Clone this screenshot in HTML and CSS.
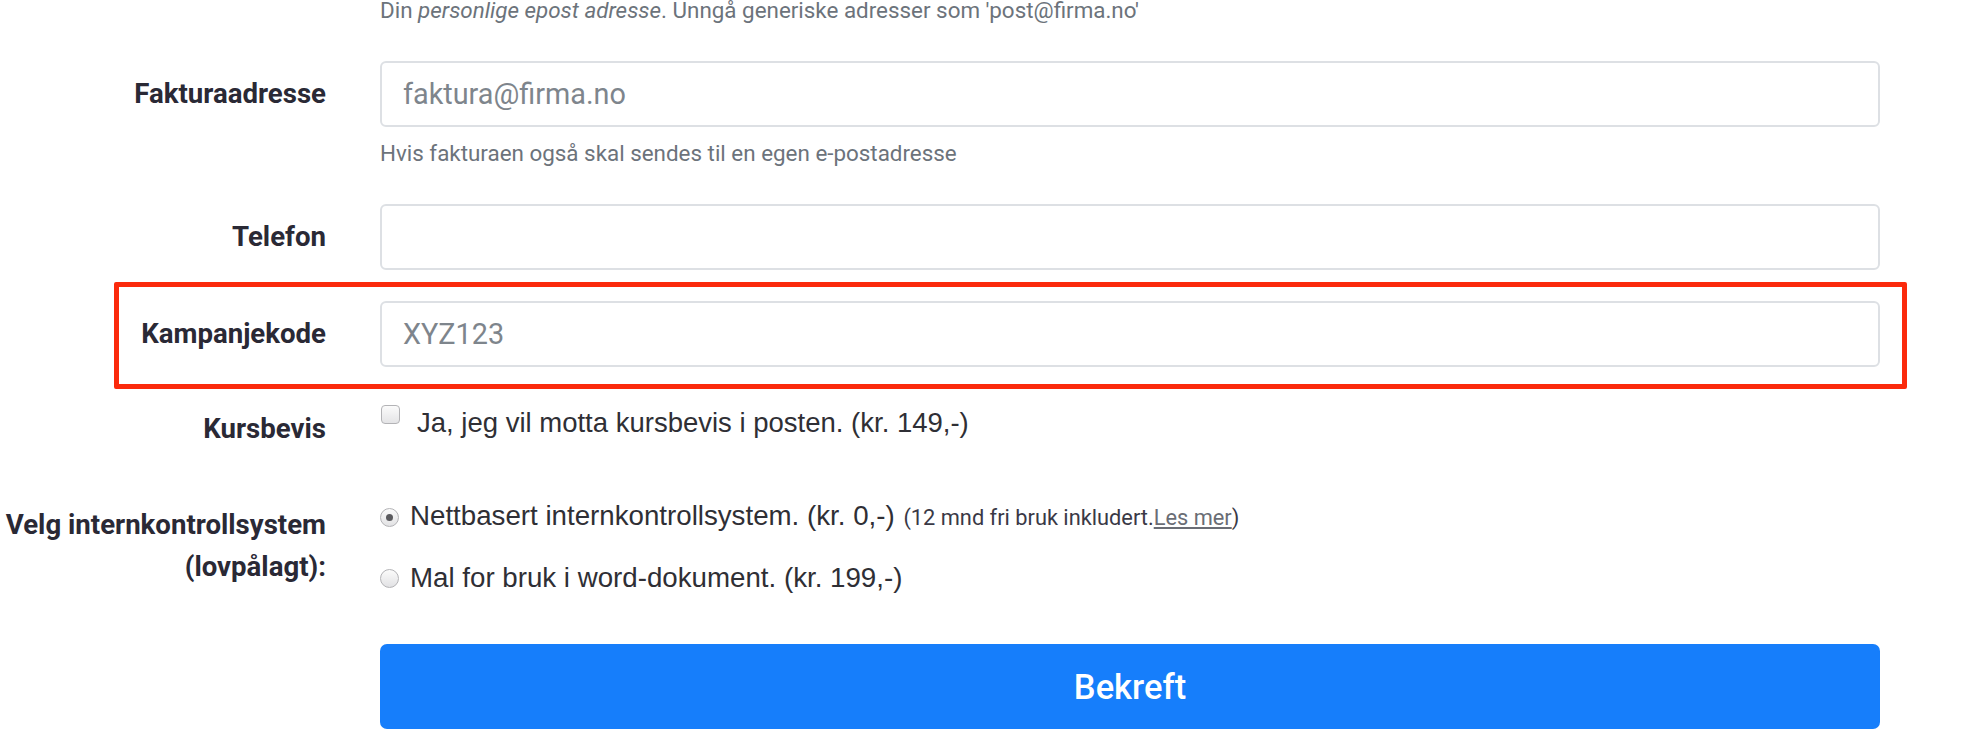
FILE: index.html
```html
<!DOCTYPE html>
<html lang="no">
<head>
<meta charset="utf-8">
<title>Bestilling</title>
<link rel="stylesheet" href="styles.css">
</head>
<body>
<form class="form">
  <div class="row row-top">
    <div></div>
    <div class="field">
      <small class="help">Din <em>personlige epost adresse</em>. Unngå generiske adresser som 'post@firma.no'</small>
    </div>
  </div>

  <div class="row row-faktura">
    <label class="label label-mid" for="faktura">Fakturaadresse</label>
    <div class="field">
      <input class="input" id="faktura" type="email" placeholder="faktura@firma.no">
      <small class="help help-below">Hvis fakturaen også skal sendes til en egen e-postadresse</small>
    </div>
  </div>

  <div class="row row-telefon">
    <label class="label label-mid" for="telefon">Telefon</label>
    <div class="field">
      <input class="input" id="telefon" type="tel">
    </div>
  </div>

  <div class="row row-kampanje highlight">
    <label class="label label-mid" for="kampanje">Kampanjekode</label>
    <div class="field">
      <input class="input" id="kampanje" type="text" placeholder="XYZ123">
    </div>
  </div>

  <div class="row row-kurs">
    <div class="label label-kurs">Kursbevis</div>
    <div class="field">
      <div class="check">
        <span class="box"></span>
        <span class="opt-text">Ja, jeg vil motta kursbevis i posten. (kr. 149,-)</span>
      </div>
    </div>
  </div>

  <div class="row row-ik">
    <div class="label label-ik">Velg internkontrollsystem<br>(lovpålagt):</div>
    <div class="field">
      <div class="radio">
        <span class="dot checked"></span>
        <span class="opt-text">Nettbasert internkontrollsystem. (kr. 0,-) <span class="note">(12 mnd fri bruk inkludert.<a href="#" class="more">Les mer</a>)</span></span>
      </div>
      <div class="radio radio-2">
        <span class="dot"></span>
        <span class="opt-text">Mal for bruk i word-dokument. (kr. 199,-)</span>
      </div>
    </div>
  </div>

  <div class="row row-btn">
    <div></div>
    <div class="field">
      <button type="button" class="btn">Bekreft</button>
    </div>
  </div>
</form>
</body>
</html>
```

FILE: styles.css
```css
html, body {
  margin: 0;
  padding: 0;
  background: #ffffff;
  overflow: hidden;
}

body {
  font-family: Roboto, "Liberation Sans", Arial, sans-serif;
  color: #2a2935;
}

.form {
  width: 1880px;
}

.row {
  display: grid;
  grid-template-columns: 326px 1500px;
  column-gap: 54px;
}

.field {
  display: flex;
  flex-direction: column;
}

.help {
  display: block;
  font-family: Roboto, sans-serif;
  font-size: 22.4px;
  line-height: 28px;
  color: #6c737b;
}

.help em {
  font-style: italic;
}

.row-top {
  margin-top: -4px;
}

.help-below {
  margin-top: 12px;
}

.row-faktura {
  margin-top: 37px;
}

.row-telefon {
  margin-top: 37px;
}

.row-kampanje {
  margin-top: 31px;
}

.row-kurs {
  margin-top: 38px;
}

.row-ik {
  margin-top: 51px;
}

.row-btn {
  margin-top: 48px;
}

.label {
  font-family: Roboto, sans-serif;
  font-weight: 700;
  font-size: 27.6px;
  text-align: right;
  color: #2a2935;
}

.label-mid {
  align-self: center;
  line-height: 36px;
  height: 36px;
  display: block;
  margin-top: 0;
}

.row-faktura .label-mid {
  align-self: start;
  margin-top: 15px;
}

.label-kurs {
  line-height: 36px;
  padding-top: 6px;
}

.label-ik {
  line-height: 42px;
  padding-top: 6px;
}

.input {
  box-sizing: border-box;
  width: 1500px;
  height: 66px;
  border: 2px solid #dde0e4;
  border-radius: 6px;
  padding: 0 21px;
  font-family: Roboto, sans-serif;
  font-size: 28.8px;
  color: #495057;
  background: #fff;
  outline: none;
}

.input::placeholder {
  color: #7e858c;
  opacity: 1;
}

.highlight {
  position: relative;
}

.highlight::before {
  content: "";
  position: absolute;
  left: 114px;
  right: -27px;
  top: -19px;
  bottom: -22px;
  border: 5px solid #fb2a0c;
  border-radius: 2px;
  pointer-events: none;
}

.check,
.radio {
  display: flex;
  align-items: flex-start;
  font-family: "Liberation Sans", Arial, sans-serif;
  font-size: 27.5px;
  line-height: 36px;
  color: #2f2f35;
}

.radio {
  font-size: 27.7px;
}

.opt-text {
  white-space: nowrap;
}

.box {
  flex: none;
  box-sizing: border-box;
  width: 19px;
  height: 19px;
  margin-left: 1px;
  margin-right: 17px;
  border: 1.5px solid #b3b3b6;
  border-radius: 4px;
  background: linear-gradient(#fbfbfb, #e4e4e6);
}

.radio {
  align-items: center;
}

.radio-2 {
  margin-top: 24px;
}

.dot {
  flex: none;
  box-sizing: border-box;
  width: 19px;
  height: 19px;
  margin-left: 0;
  margin-right: 11px;
  border: 1.5px solid #b3b3b6;
  border-radius: 50%;
  background: linear-gradient(#fbfbfb, #e2e2e4);
  position: relative;
}

.dot.checked::after {
  content: "";
  position: absolute;
  left: 50%;
  top: 50%;
  width: 7px;
  height: 7px;
  margin: -3.5px 0 0 -3.5px;
  border-radius: 50%;
  background: #5a5a5e;
}

.note {
  font-family: Roboto, sans-serif;
  font-size: 21.8px;
  color: #3a3946;
  margin-left: 1px;
}

.more {
  color: #6a6d75;
  text-decoration: underline;
}

.btn {
  width: 1500px;
  height: 85px;
  border: none;
  border-radius: 7px;
  background: #167efb;
  color: #ffffff;
  font-family: Roboto, sans-serif;
  font-weight: 500;
  font-size: 34.5px;
  cursor: pointer;
}
```
